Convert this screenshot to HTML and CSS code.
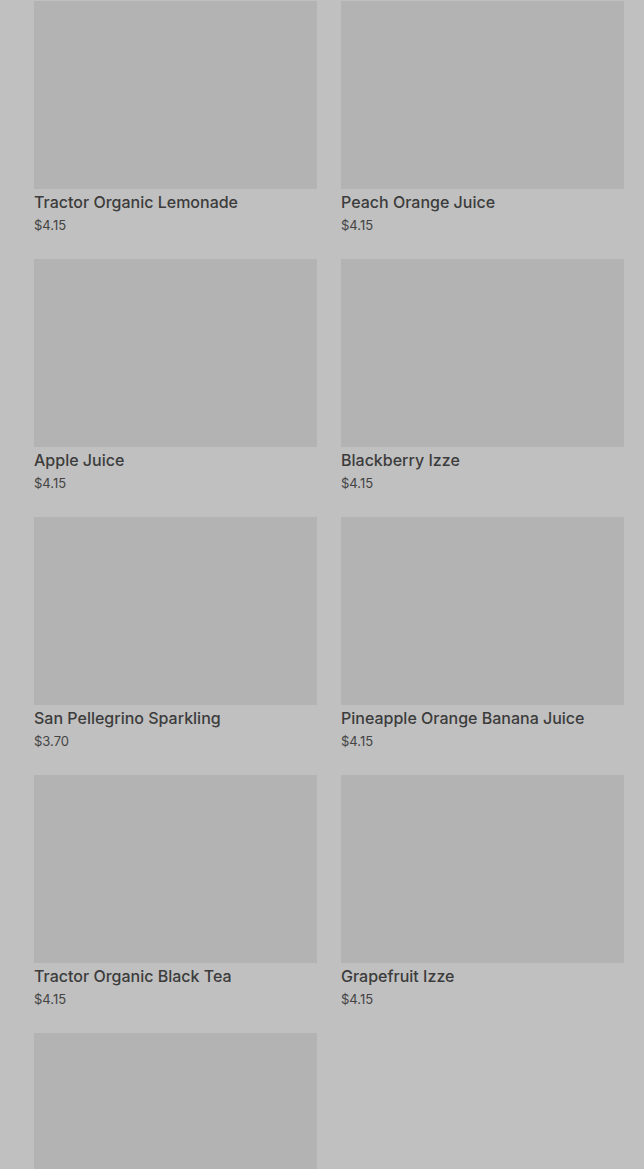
FILE: index.html
```html
<!DOCTYPE HTML>
<html>
<head>
    <title>Drinks</title>
    <meta charset="utf-8" />
    <meta name="viewport" content="width=device-width, initial-scale=1" />
    <link rel="stylesheet" href="styles.css">
</head>
<body>
    <div id="menu">
        <div class="item-grid">

            <div class="menu-item">
                <div class="item-image"></div>
                <div class="item-name">Tractor Organic Lemonade</div>
                <div class="item-price">$4.15</div>
            </div>

            <div class="menu-item">
                <div class="item-image"></div>
                <div class="item-name">Peach Orange Juice</div>
                <div class="item-price">$4.15</div>
            </div>

            <div class="menu-item">
                <div class="item-image"></div>
                <div class="item-name">Apple Juice</div>
                <div class="item-price">$4.15</div>
            </div>

            <div class="menu-item">
                <div class="item-image"></div>
                <div class="item-name">Blackberry Izze</div>
                <div class="item-price">$4.15</div>
            </div>

            <div class="menu-item">
                <div class="item-image"></div>
                <div class="item-name">San Pellegrino Sparkling</div>
                <div class="item-price">$3.70</div>
            </div>

            <div class="menu-item">
                <div class="item-image"></div>
                <div class="item-name">Pineapple Orange Banana Juice</div>
                <div class="item-price">$4.15</div>
            </div>

            <div class="menu-item">
                <div class="item-image"></div>
                <div class="item-name">Tractor Organic Black Tea</div>
                <div class="item-price">$4.15</div>
            </div>

            <div class="menu-item">
                <div class="item-image"></div>
                <div class="item-name">Grapefruit Izze</div>
                <div class="item-price">$4.15</div>
            </div>

            <!-- last card: name and price fall below the fold -->
            <div class="menu-item">
                <div class="item-image"></div>
            </div>

        </div>
    </div>
</body>
</html>
```

FILE: styles.css
```css
/* Reset */
html, body, div { margin: 0; padding: 0; border: 0; }
html { box-sizing: border-box; }
*, *:before, *:after { box-sizing: inherit; }

body {
    background-color: #c0c0c0;
    color: #3b3b3b;
    font-family: Inter, "Liberation Sans", sans-serif;
    line-height: 1;
    overflow: hidden;
}

#menu {
    padding: 1px 20px 0 34px;
}

.item-grid {
    display: grid;
    grid-template-columns: 283px 283px;
    column-gap: 24px;
    row-gap: 0;
}

.menu-item {
    height: 258px;
}

.item-image {
    height: 188px;
    background-color: #b3b3b3;
}

.item-name {
    margin-top: 0;
    font-size: 16px;
    line-height: 26px;
    font-weight: 500;
    color: #3c3c3c;
}

.item-price {
    font-size: 13px;
    line-height: 20px;
    color: #444444;
}
```
